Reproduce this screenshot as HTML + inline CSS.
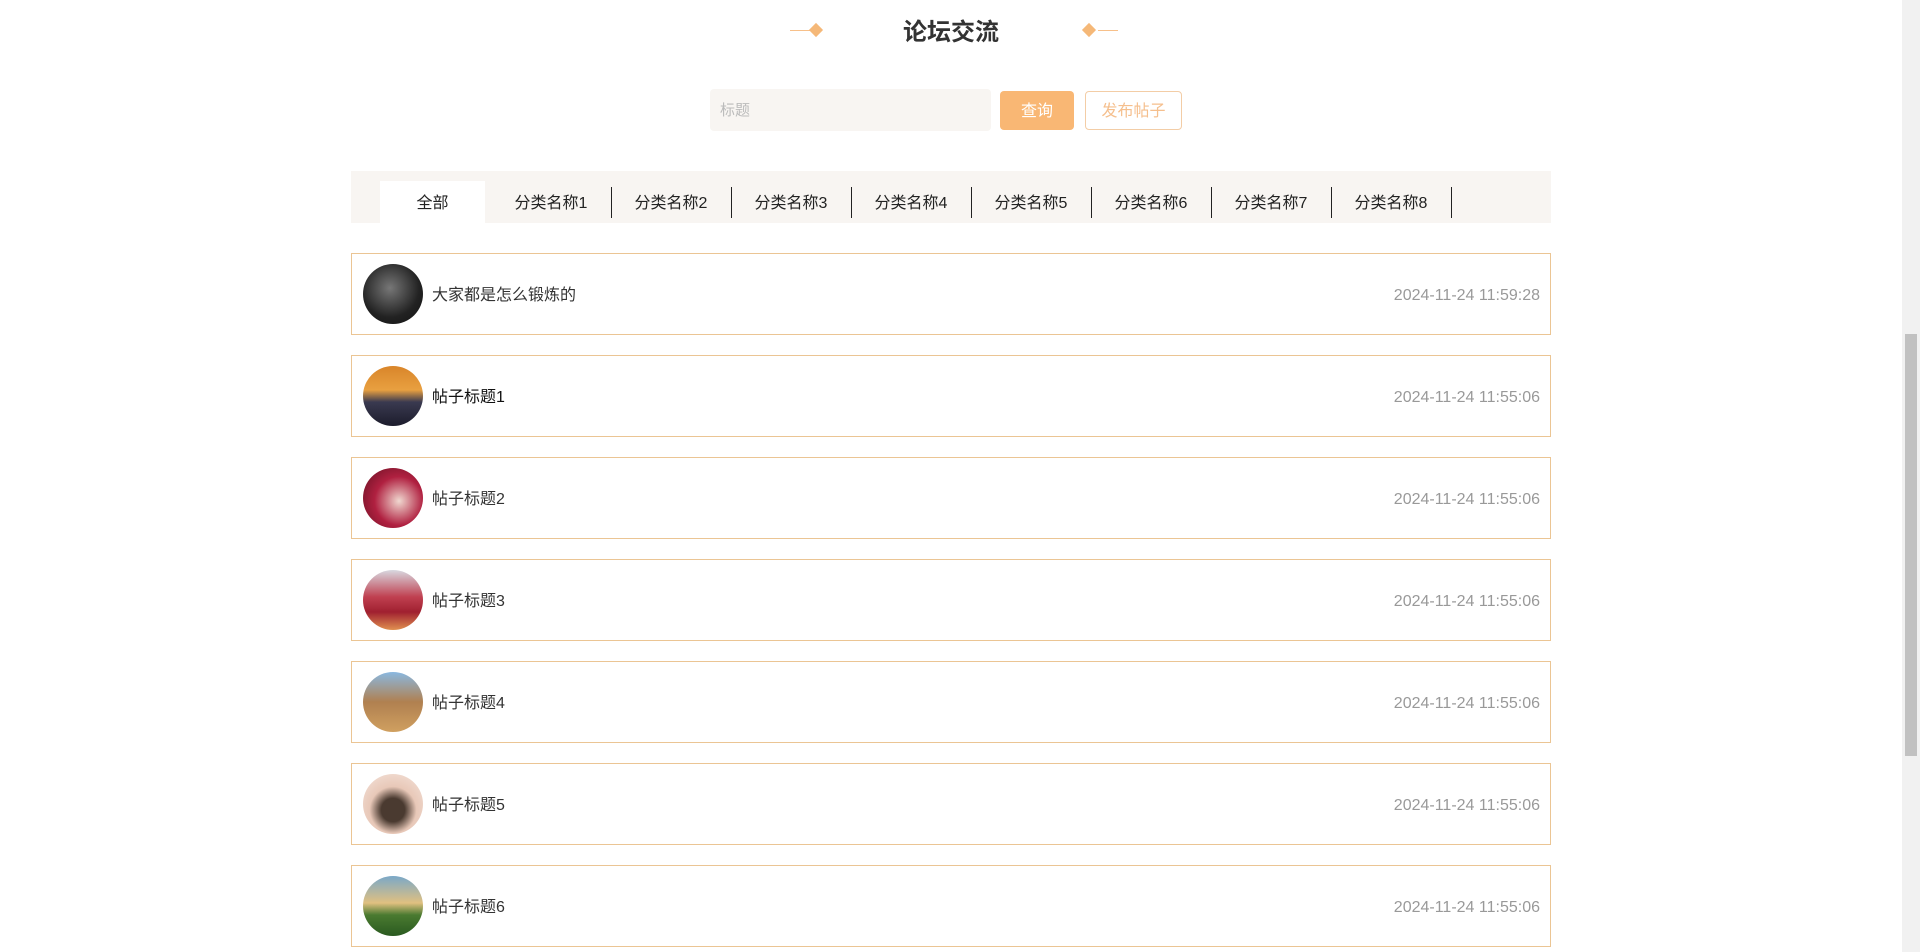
<!DOCTYPE html>
<html><head><meta charset="utf-8"><style>
*{margin:0;padding:0;box-sizing:border-box}
body{width:1920px;height:952px;overflow:hidden;background:#fff;font-family:"Liberation Sans","Noto Sans CJK SC",sans-serif;position:relative}
.a{position:absolute}
.title{left:0;width:1902px;top:16px;text-align:center;font-size:24px;font-weight:bold;color:#333;line-height:34px}
.line{height:1px;background:#f7c08a}
.dia{width:10px;height:10px;background:#f5b878;transform:rotate(45deg)}
.inp{left:710px;top:89px;width:281px;height:42px;background:#f8f5f2;border-radius:4px;color:#bbb;font-size:15px;line-height:44px;padding-left:10px}
.btn1{left:1000px;top:91px;width:74px;height:39px;background:#f9b774;border-radius:4px;color:#fff;font-size:16px;text-align:center;line-height:41px}
.btn2{left:1085px;top:91px;width:97px;height:39px;border:1px solid #f3cda6;border-radius:4px;color:#f5bf8d;font-size:16px;text-align:center;line-height:39px}
.bar{left:351px;top:171px;width:1200px;height:52px;background:#f8f5f2}
.tab{top:181px;height:42px;line-height:46px;text-align:center;font-size:16px;color:#222}
.sep{top:187px;width:1px;height:31px;background:#222}
.row{left:351px;width:1200px;height:82px;border:1px solid #ebc594;background:#fff}
.av{position:absolute;left:11px;top:10px;width:60px;height:60px;border-radius:50%}
.tt{position:absolute;left:80px;top:2px;line-height:80px;font-size:16px;color:#333}
.dt{position:absolute;right:10px;top:2px;line-height:80px;font-size:16px;color:#999}
.sb{left:1902px;top:0;width:18px;height:952px;background:#f1f1f1}
.th{left:1905px;top:334px;width:12px;height:422px;background:#c1c1c1}
</style></head><body>
<div class="a title">论坛交流</div>
<div class="a line" style="left:790px;top:30px;width:20px"></div>
<div class="a dia" style="left:811px;top:25px"></div>
<div class="a dia" style="left:1084px;top:25px"></div>
<div class="a line" style="left:1098px;top:30px;width:20px"></div>
<div class="a inp">标题</div>
<div class="a btn1">查询</div>
<div class="a btn2">发布帖子</div>
<div class="a bar"></div>
<div class="a tab" style="left:380px;width:105px;background:#fff">全部</div>
<div class="a tab" style="left:491px;width:120px">分类名称1</div><div class="a sep" style="left:611px"></div>
<div class="a tab" style="left:611px;width:120px">分类名称2</div><div class="a sep" style="left:731px"></div>
<div class="a tab" style="left:731px;width:120px">分类名称3</div><div class="a sep" style="left:851px"></div>
<div class="a tab" style="left:851px;width:120px">分类名称4</div><div class="a sep" style="left:971px"></div>
<div class="a tab" style="left:971px;width:120px">分类名称5</div><div class="a sep" style="left:1091px"></div>
<div class="a tab" style="left:1091px;width:120px">分类名称6</div><div class="a sep" style="left:1211px"></div>
<div class="a tab" style="left:1211px;width:120px">分类名称7</div><div class="a sep" style="left:1331px"></div>
<div class="a tab" style="left:1331px;width:120px">分类名称8</div><div class="a sep" style="left:1451px"></div>

<div class="a row" style="top:253px"><div class="av" style="background:radial-gradient(circle at 45% 40%,#777,#222 60%,#111)"></div><div class="tt">大家都是怎么锻炼的</div><div class="dt">2024-11-24 11:59:28</div></div>
<div class="a row" style="top:355px"><div class="av" style="background:linear-gradient(#d9852a,#e8a040 40%,#3a3a50 60%,#1c1c2c)"></div><div class="tt" style="color:#111">帖子标题1</div><div class="dt">2024-11-24 11:55:06</div></div>
<div class="a row" style="top:457px"><div class="av" style="background:radial-gradient(circle at 60% 55%,#f0d8d0,#b02040 50%,#601020)"></div><div class="tt">帖子标题2</div><div class="dt">2024-11-24 11:55:06</div></div>
<div class="a row" style="top:559px"><div class="av" style="background:linear-gradient(#d8d8e0,#c04050 45%,#a02030 70%,#e09050)"></div><div class="tt">帖子标题3</div><div class="dt">2024-11-24 11:55:06</div></div>
<div class="a row" style="top:661px"><div class="av" style="background:linear-gradient(#8ab8e0,#b08050 50%,#d0a060)"></div><div class="tt">帖子标题4</div><div class="dt">2024-11-24 11:55:06</div></div>
<div class="a row" style="top:763px"><div class="av" style="background:radial-gradient(circle at 50% 60%,#4a3a30 25%,#e8c8b8 50%,#f5e5dd)"></div><div class="tt">帖子标题5</div><div class="dt">2024-11-24 11:55:06</div></div>
<div class="a row" style="top:865px"><div class="av" style="background:linear-gradient(#7aa8c8,#e0c080 45%,#4a7a30 65%,#2a5a20)"></div><div class="tt">帖子标题6</div><div class="dt">2024-11-24 11:55:06</div></div>
<div class="a sb"></div><div class="a th"></div>
</body></html>
